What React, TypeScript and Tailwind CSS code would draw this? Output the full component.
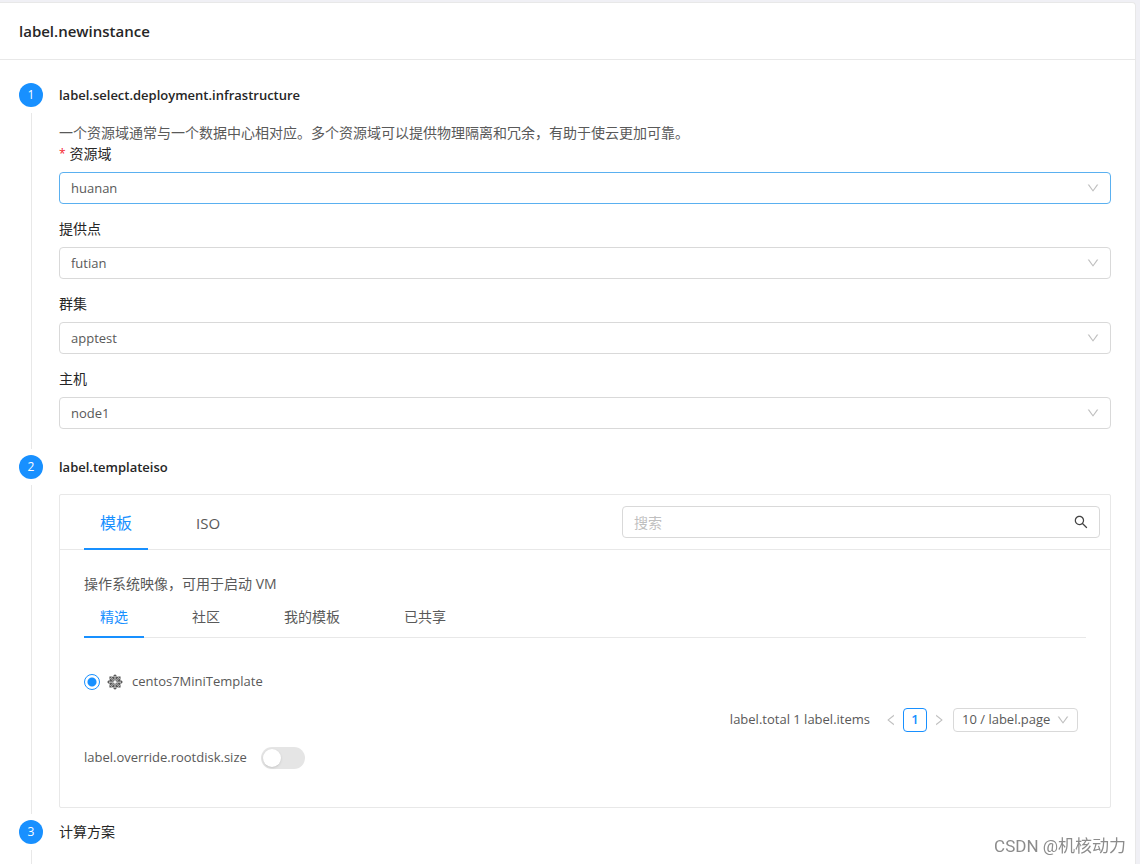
import { useState, type ReactNode } from "react";
import { AiOutlineDown, AiOutlineLeft, AiOutlineRight, AiOutlineSearch } from "react-icons/ai";
import { FaCentos } from "react-icons/fa";

type StepProps = { number: number; title: ReactNode; last?: boolean; children?: ReactNode };

function Step({ number, title, last = false, children }: StepProps) {
  return (
    <li className={last ? "flex grow gap-4" : "flex gap-4"}>
      <div className="flex w-6 shrink-0 flex-col items-center">
        <span className="flex size-6 shrink-0 items-center justify-center rounded-full bg-[#1890ff] text-[12px] text-white">
          {number}
        </span>
        <span className={last ? "mt-1.5 w-px grow bg-[#e8e8e8]" : "my-1.5 w-px grow bg-[#e8e8e8]"} />
      </div>
      <section className="min-w-0 grow">
        <h2 className="h-6 leading-6 text-[#262626]">{title}</h2>
        {children}
      </section>
    </li>
  );
}

type FieldProps = { id: string; label: string; value: string; required?: boolean; active?: boolean };

function Field({ id, label, value, required = false, active = false }: FieldProps) {
  return (
    <div>
      <label htmlFor={id} className="flex h-[21px] items-center text-[14px] text-[#262626]">
        {required && <span className="mr-1 text-[12px] text-[#f5222d]">*</span>}
        {label}
      </label>
      <div className="mt-2 grid items-center">
        <select
          id={id}
          defaultValue={value}
          className={
            active
              ? "col-start-1 row-start-1 h-8 w-full appearance-none rounded border border-[#5ab0f0] bg-white pt-0.5 pr-8 pl-[11px] outline-none"
              : "col-start-1 row-start-1 h-8 w-full appearance-none rounded border border-[#d9d9d9] bg-white pt-0.5 pr-8 pl-[11px] outline-none"
          }
        >
          <option>{value}</option>
        </select>
        <AiOutlineDown size={14} className="pointer-events-none col-start-1 row-start-1 mr-[11px] justify-self-end text-[#bfbfbf]" />
      </div>
    </div>
  );
}

const scopes = ["精选", "社区", "我的模板", "已共享"];

export default function App() {
  const [source, setSource] = useState("模板");
  const [scope, setScope] = useState("精选");

  return (
    <div className="flex min-h-screen flex-col bg-[#f0f0f5] pt-0.5 pr-1 font-['Open_Sans','Noto_Sans_CJK_SC',sans-serif] text-[13px] text-[#595959]">
      <main className="flex grow flex-col rounded-tr-sm border-t border-r border-[#e8e8e8] bg-white">
        <header className="flex h-[57px] items-center border-b border-[#e8e8e8] pl-[19px]">
          <h1 className="text-[15px] font-semibold text-[#262626]">label.newinstance</h1>
        </header>
        <ol className="flex grow flex-col pt-[23px] pr-6 pl-[19px]">
          <Step number={1} title={<span className="font-semibold">label.select.deployment.infrastructure</span>}>
            <div className="pt-[15px] pb-[26px]">
              <p className="text-[14px] leading-[21px]">
                一个资源域通常与一个数据中心相对应。多个资源域可以提供物理隔离和冗余，有助于使云更加可靠。
              </p>
              <div className="flex flex-col gap-3.5">
                <Field id="zone" label="资源域" value="huanan" required active />
                <Field id="pod" label="提供点" value="futian" />
                <Field id="cluster" label="群集" value="apptest" />
                <Field id="host" label="主机" value="node1" />
              </div>
            </div>
          </Step>

          <Step number={2} title={<span className="font-semibold">label.templateiso</span>}>
            <div className="pt-[15px] pb-3">
              <div className="rounded-xs border border-[#e8e8e8]">
                <div className="flex h-[55px] justify-between border-b border-[#e8e8e8] pr-2.5 pl-6">
                  <div role="tablist" className="flex gap-8">
                    {["模板", "ISO"].map((name) => (
                      <button
                        key={name}
                        type="button"
                        role="tab"
                        aria-selected={source === name}
                        onClick={() => setSource(name)}
                        className={
                          source === name
                            ? "-mb-px border-b-2 border-[#1890ff] px-4 pt-[3px] text-[16px] text-[#1890ff]"
                            : "-mb-px border-b-2 border-transparent px-4 pt-[3px] text-[15px]"
                        }
                      >
                        {name}
                      </button>
                    ))}
                  </div>
                  <div className="mt-[11px] flex h-8 w-[478px] items-center rounded border border-[#d9d9d9] pr-2.5 pl-[11px]">
                    <input
                      type="text"
                      aria-label="搜索"
                      placeholder="搜索"
                      className="min-w-0 grow bg-transparent text-[14px] outline-none placeholder:text-[#bfbfbf]"
                    />
                    <button type="button" aria-label="搜索" className="text-[#434343]">
                      <AiOutlineSearch size={16} />
                    </button>
                  </div>
                </div>

                <div className="px-6 pt-[23px] pb-[38px]">
                  <p className="text-[14px] leading-[21px]">
                    操作系统映像，可用于启动 VM
                  </p>
                  <div role="tablist" className="flex h-11 gap-8 border-b border-[#e8e8e8] text-[14px]">
                    {scopes.map((name) => (
                      <button
                        key={name}
                        type="button"
                        role="tab"
                        aria-selected={scope === name}
                        onClick={() => setScope(name)}
                        className={
                          scope === name
                            ? "-mb-px border-b-2 border-[#1890ff] px-4 pt-0.5 text-[#1890ff]"
                            : "-mb-px border-b-2 border-transparent px-4 pt-0.5"
                        }
                      >
                        {name}
                      </button>
                    ))}
                  </div>

                  <label className="mt-8 flex h-6 items-center">
                    <input
                      type="radio"
                      name="template"
                      defaultChecked
                      className="size-4 appearance-none rounded-full border border-[#1890ff] bg-white checked:bg-[radial-gradient(circle,#1890ff_4px,#fff_5px)]"
                    />
                    <FaCentos size={18} className="mr-2 ml-1.5 text-[#595959]" />
                    centos7MiniTemplate
                  </label>

                  <nav aria-label="pagination" className="mt-3.5 mr-2 flex h-6 items-center justify-end">
                    <span className="mr-3.5">label.total 1 label.items</span>
                    <button type="button" aria-label="previous page" disabled className="mr-[5px] text-[#bfbfbf]">
                      <AiOutlineLeft size={14} />
                    </button>
                    <button
                      type="button"
                      aria-current="page"
                      className="size-6 rounded border border-[#1890ff] font-semibold text-[#1890ff]"
                    >
                      1
                    </button>
                    <button type="button" aria-label="next page" disabled className="ml-[5px] text-[#bfbfbf]">
                      <AiOutlineRight size={14} />
                    </button>
                    <div className="ml-[7px] grid items-center">
                      <select
                        aria-label="page size"
                        className="col-start-1 row-start-1 h-6 w-[125px] appearance-none rounded border border-[#d9d9d9] bg-white pl-2 outline-none"
                      >
                        <option>10 / label.page</option>
                      </select>
                      <AiOutlineDown
                        size={14}
                        className="pointer-events-none col-start-1 row-start-1 mr-2 justify-self-end text-[#bfbfbf]"
                      />
                    </div>
                  </nav>

                  <label className="mt-[15px] flex h-[22px] items-center gap-3.5">
                    label.override.rootdisk.size
                    <input
                      type="checkbox"
                      role="switch"
                      className="h-[22px] w-11 appearance-none rounded-full bg-[#e5e5e5] before:m-0.5 before:block before:size-[18px] before:rounded-full before:bg-white before:shadow-sm checked:bg-[#1890ff] checked:before:ml-6"
                    />
                  </label>
                </div>
              </div>
            </div>
          </Step>

          <Step number={3} title={<span className="text-[14px]">计算方案</span>} last />
        </ol>
      </main>
      <div className="pointer-events-none fixed right-3.5 bottom-1.5 font-['Roboto','Noto_Sans_CJK_SC',sans-serif] text-[17px] leading-6 text-[#8c8c8c] [text-shadow:1px_1px_0_#fff]">
        CSDN @机核动力
      </div>
    </div>
  );
}
